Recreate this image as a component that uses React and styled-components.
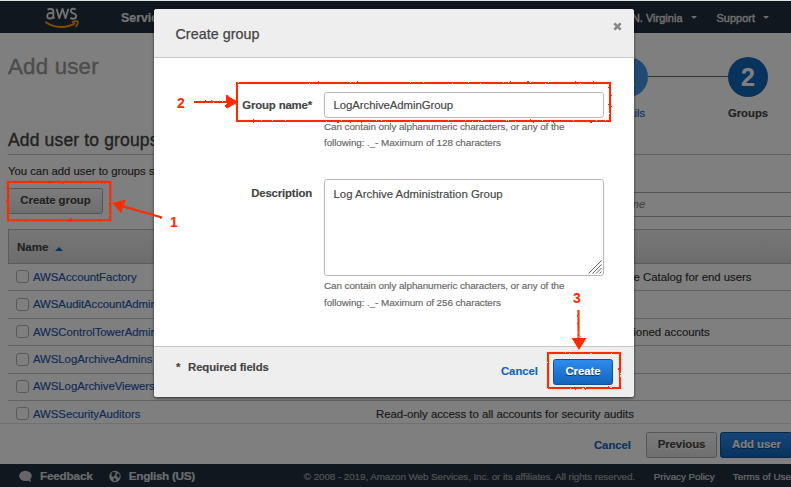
import React from "react";
import styled, { createGlobalStyle } from "styled-components";

const GlobalStyle = createGlobalStyle`
  * { box-sizing: border-box; }
  html, body { margin: 0; padding: 0; overflow: hidden; }
  body { font-family: "Liberation Sans", Arial, sans-serif; color: #333; font-size: 11.5px; }
`;

const Screen = styled.div`
  position: relative;
  width: 791px;
  height: 487px;
  overflow: hidden;
  background: #fff;
  white-space: nowrap;
  -webkit-text-stroke: 0.15px;
`;

/* ---------- console page ---------- */
const Page = styled.div`
  display: flex;
  flex-direction: column;
  height: 487px;
`;
const NavBar = styled.header`
  flex: none;
  display: flex;
  justify-content: space-between;
  height: 33px;
  background: #222f3e;
  border-top: 1px solid #dce6e4;
  color: #e8e8e8;
  font-size: 11.5px;
  font-weight: bold;
`;
const NavGroup = styled.div`
  display: flex;
  align-items: center;
  height: 33px;
`;
const NavStart = styled(NavGroup)`
  padding-left: 44px;
  gap: 41px;
  font-size: 12.4px;
`;
const NavEnd = styled(NavGroup)`
  gap: 20px;
  padding-right: 22px;
  font-size: 10.9px;
  color: #dedede;
  font-weight: normal;
  -webkit-text-stroke: 0.45px #dedede;
`;
const NavItem = styled.span`
  display: flex;
  align-items: center;
  gap: 8px;
  letter-spacing: ${(p) => p.$spacing || "0"};
`;
const NavCaret = styled.i`
  border: 3px solid transparent;
  border-top: 3px solid #ddd;
  border-bottom: 0;
`;
const Masthead = styled.section`
  flex: none;
  display: flex;
  justify-content: space-between;
  height: 96px;
  padding: 24px 23px 0 8px;
`;
const PageTitle = styled.h1`
  margin: -3px 0 0;
  font-size: 22.3px;
  line-height: 26px;
  font-weight: normal;
  color: #9a9a9a;
  letter-spacing: 0.2px;
  -webkit-text-stroke: 0.4px;
`;
const Steps = styled.div`
  display: flex;
`;
const StepLine = styled.div`
  width: 80px;
  height: 1px;
  margin-top: 19px;
  background: #606864;
`;
const Step = styled.div`
  display: flex;
  flex-direction: column;
  align-items: center;
  width: 40px;
  gap: 9px;
  color: ${(p) => (p.$current ? "#444" : "#1166bb")};
  font-weight: ${(p) => (p.$current ? "bold" : "normal")};
  font-size: 11.3px;
  line-height: 14px;
`;
const StepCircle = styled.div`
  width: 40px;
  height: 40px;
  border-radius: 50%;
  background: ${(p) => (p.$current ? "#1166bb" : "#4396e6")};
  color: #fff;
  font-size: 25px;
  line-height: 41px;
  font-weight: bold;
  text-align: center;
`;
const Content = styled.main`
  flex: none;
  height: 294px;
  padding-left: 8px;
  overflow: hidden;
`;
const SectionTitle = styled.h2`
  margin: 0;
  height: 26px;
  padding-top: 1px;
  border-bottom: 1px solid #c4c4c4;
  color: #444;
  font-weight: normal;
  font-size: 17.5px;
  line-height: 21px;
  letter-spacing: 0.15px;
  -webkit-text-stroke: 0.35px;
`;
const Intro = styled.p`
  margin: 9px 0 0;
  line-height: 15px;
  font-size: 11.3px;
`;
const Tools = styled.div`
  display: flex;
  height: 50px;
  padding-top: 9px;
  gap: 57px;
`;
const Button = styled.button`
  display: flex;
  align-items: center;
  justify-content: center;
  width: ${(p) => p.$width};
  height: 25.5px;
  flex: none;
  padding: 0 0 1px;
  font: bold 11.4px "Liberation Sans", Arial, sans-serif;
  letter-spacing: -0.05px;
  -webkit-text-stroke: 0.15px;
  border-radius: 2.5px;
  border: 1px solid ${(p) => (p.$primary ? "#11508e" : "#aaa")};
  color: ${(p) => (p.$primary ? "#fff" : "#444")};
  background: ${(p) => (p.$primary ? "linear-gradient(#2e8bee, #1166bb)" : "linear-gradient(#f8f8f8, #dedede)")};
  text-shadow: ${(p) => (p.$primary ? "0 1px 1px #003366" : "0 1px 0 #fff")};
`;
const SearchBox = styled.div`
  flex: 1;
  height: 25px;
  margin-top: 4px;
  border: 1px solid #aaa;
  border-right: 0;
  padding-left: 456px;
  line-height: 23px;
  font-size: 11.3px;
  font-style: italic;
  color: #888;
`;
const Table = styled.div`
  border-left: 1px solid #c6c6c6;
`;
const HeadRow = styled.div`
  display: flex;
  align-items: center;
  gap: 7px;
  height: 35px;
  padding: 0 0 0 8px;
  border-top: 1px solid #bbb;
  border-bottom: 1px solid #b5b5b5;
  background: linear-gradient(#eee, #dadada);
  font-weight: bold;
  font-size: 11.6px;
  letter-spacing: -0.08px;
  color: #444;
  margin-left: -1px;
  border-left: 1px solid #bbb;
`;
const SortArrow = styled.i`
  border: 4px solid transparent;
  border-bottom: 4px solid #1166bb;
  border-top: 0;
  margin-top: 4px;
`;
const Row = styled.div`
  display: grid;
  grid-template-columns: 24px 344px 1fr;
  align-items: center;
  height: 27.4px;
  margin-left: -1px;
  padding-bottom: 0.6px;
  background: #fff;
  border-bottom: 1px solid #c4c4c4;
`;
const Check = styled.span`
  width: 13px;
  height: 13px;
  margin-left: 8px;
  border: 1px solid #b4b4b4;
  border-radius: 3px;
`;
const GroupLink = styled.a`
  padding-left: 1px;
  color: #1a55ad;
  font-size: 11.4px;
  letter-spacing: -0.06px;
`;
const Cell = styled.span`
  font-size: 11.4px;
  letter-spacing: -0.02px;
`;
const ActionBar = styled.div`
  flex: none;
  display: flex;
  justify-content: flex-end;
  height: 41px;
  padding-top: 8px;
  border-top: 1px solid #e0e0e0;
  background: #fff;
  gap: 3px;
  margin-right: -2px;
`;
const CancelLink = styled.a`
  color: #1166bb;
  font-weight: bold;
  font-size: 11.3px;
  line-height: 25px;
  margin-right: ${(p) => p.$gap};
`;
const BarCancel = styled(CancelLink)`
  line-height: 26px;
`;
const FooterBar = styled.footer`
  flex: 1;
  display: flex;
  align-items: center;
  padding-left: 19px;
  padding-top: 1px;
  background: #222f3e;
  color: #c4c8cc;
`;
const FooterItem = styled.span`
  font-size: ${(p) => p.$size || "9.9px"};
  font-weight: ${(p) => (p.$bold ? "bold" : "normal")};
  color: ${(p) => p.$color || "#d4d8dc"};
  -webkit-text-stroke: 0.2px;
  letter-spacing: ${(p) => p.$spacing || "0"};
  width: ${(p) => p.$width};
  margin-left: ${(p) => p.$left || "0"};
  flex: none;
`;

/* ---------- dialog ---------- */
const Backdrop = styled.div`
  position: absolute;
  inset: 1px 0 0;
  padding: 8px 0 0 154px;
  background: rgba(0, 0, 0, 0.5);
`;
const Dialog = styled.div`
  width: 480px;
  height: 388px;
  border-radius: 3px;
  background: #fff;
  overflow: hidden;
  box-shadow: 0 1px 3px rgba(0, 0, 0, 0.65);
`;
const DialogHead = styled.div`
  display: flex;
  justify-content: space-between;
  height: 49px;
  padding: 17px 12px 0 21.5px;
  background: #eee;
  border-bottom: 1px solid #c8c8c8;
  color: #444;
  font-size: 14.3px;
  line-height: 17px;
  letter-spacing: 0.05px;
  -webkit-text-stroke: 0.25px;
`;
const CloseIcon = styled.svg`
  display: block;
  width: 9px;
  height: 9px;
  margin-top: -4px;
`;
const DialogBody = styled.div`
  display: flex;
  flex-direction: column;
  height: 288px;
  padding-top: 34px;
`;
const Field = styled.div`
  display: grid;
  grid-template-columns: 158px 280px;
  column-gap: 12px;
  height: ${(p) => p.$height};
`;
const Label = styled.label`
  text-align: right;
  font-weight: bold;
  font-size: 11.4px;
  line-height: ${(p) => p.$line};
  color: #444;
  letter-spacing: -0.17px;
`;
const Control = styled.div`
  position: relative;
  height: ${(p) => p.$height};
  border: 1px solid #b9b9b9;
  border-radius: 3px;
  padding: 0 8.5px;
  color: #444;
  font-size: 11.4px;
  line-height: ${(p) => p.$line};
  letter-spacing: ${(p) => p.$spacing};
`;
const ResizeGrip = styled.svg`
  position: absolute;
  right: 1px;
  bottom: 1px;
`;
const Hint = styled.div`
  padding-top: ${(p) => p.$top};
  font-size: 9.9px;
  line-height: ${(p) => p.$line};
  letter-spacing: -0.08px;
  color: #666;
`;
const DialogFoot = styled.div`
  display: flex;
  height: 51px;
  padding: 12px 21px 0 22px;
  background: #eee;
  border-top: 1px solid #c8c8c8;
`;
const Required = styled.span`
  flex: 1;
  color: #444;
  font-size: 11.4px;
  font-weight: bold;
  line-height: 16px;
  letter-spacing: -0.1px;
`;
const Star = styled.span`
  display: inline-block;
  width: 12px;
`;

/* ---------- markup over the page ---------- */
const Markup = styled.svg`
  position: absolute;
  left: 0;
  top: 0;
  font: bold 14px "Liberation Sans", Arial, sans-serif;
  fill: #ff2a00;
`;

const GROUPS = [
  { name: "AWSAccountFactory", desc: "Read-only access to account factory in AWS Service Catalog for end users" },
  { name: "AWSAuditAccountAdmins", desc: "" },
  { name: "AWSControlTowerAdmins", desc: "Admin rights to AWS Control Tower core and provisioned accounts" },
  { name: "AWSLogArchiveAdmins", desc: "" },
  { name: "AWSLogArchiveViewers", desc: "" },
  { name: "AWSSecurityAuditors", desc: "Read-only access to all accounts for security audits" },
];

function AwsLogo() {
  return (
    <svg width="36" height="26" viewBox="0 0 36 26" fill="none">
      <g stroke="#e4e4e4" strokeWidth="1.8" strokeLinejoin="round" transform="translate(0.2 -2) scale(1 1.1)">
        <path d="M3.4 6.2C4.6 5.1 9.2 4.6 9.2 7.7V13.1L10.3 14.2M9.2 9.3C6.2 8.6 3 9 3 11.8C3 14.8 7.6 15 9.2 12" />
        <path d="M12.3 5.2L15.1 13.8L18.3 5.4L21.3 13.8L24.2 5.2" />
        <path d="M31.5 5.8C29.4 4.7 26.6 5 26.6 7.3C26.6 10 32 8.9 32 11.8C32 14.7 28.3 14.8 26 13.5" />
      </g>
      <path d="M1.5 17C10.5 23.6 23 23.6 31.2 18.2" stroke="#ff9900" strokeWidth="2" />
      <path d="M28 17.2C31 15.8 34 15.8 34 17C34 18.6 33 20.6 31.4 22" stroke="#ff9900" strokeWidth="1.6" />
    </svg>
  );
}

function SpeechIcon() {
  return (
    <svg width="14" height="13" viewBox="0 0 14 13" fill="#c9ccd0">
      <ellipse cx="7" cy="5.8" rx="6.9" ry="5.6" />
      <path d="M8 10L13.2 12.6L12 8Z" />
    </svg>
  );
}

function GlobeIcon() {
  return (
    <svg width="13" height="13" viewBox="0 0 13 13">
      <circle cx="6.5" cy="6.5" r="6.2" fill="#c9ccd0" />
      <path
        d="M3.2 2.2L5 1.6L7.4 2L6.6 3.6L7.4 4.6L5.6 5.8L4.9 7L3 6.2L2.6 4.4ZM8.8 3.4L10.8 3.2L11.8 5.6L11 8.2L9.2 7.2L8.2 5.4ZM5 8.2L7.2 8.8L8 10.2L6.6 11.8L5.2 10.8Z"
        fill="#222f3e"
      />
    </svg>
  );
}

function Annotations() {
  return (
    <Markup width="791" height="487" viewBox="0 0 791 487">
      <defs>
        <filter id="rough" filterUnits="userSpaceOnUse" x="0" y="0" width="791" height="487" colorInterpolationFilters="sRGB">
          <feTurbulence type="fractalNoise" baseFrequency="0.4" numOctaves="2" seed="4" />
          <feDisplacementMap in="SourceGraphic" scale="2.2" xChannelSelector="R" yChannelSelector="G" result="jagged" />
          <feGaussianBlur in="jagged" stdDeviation="0.35" />
        </filter>
      </defs>
      <g filter="url(#rough)">
        <g fill="none" stroke="#ff2a00" strokeWidth="2.1">
          <rect x="8" y="182" width="102.3" height="38.3" />
          <rect x="237" y="83" width="373" height="38" />
          <rect x="548" y="353" width="72" height="35" />
          <path d="M162 217.5L122 206M194 102H228M578.5 310V340" />
        </g>
        <path d="M112 203L126 199.5L121 213ZM238 102L226 94.8V109.2ZM579 350L571.5 338H586.5Z" />
      </g>
      <text x="170" y="227">1</text>
      <text x="177" y="108">2</text>
      <text x="573" y="303">3</text>
    </Markup>
  );
}

export default function App() {
  return (
    <Screen>
      <GlobalStyle />
      <Page>
        <NavBar>
          <NavStart>
            <AwsLogo />
            <span>Services</span>
          </NavStart>
          <NavEnd>
            <NavItem $spacing="0.05px">N. Virginia <NavCaret /></NavItem>
            <NavItem $spacing="0.05px">Support <NavCaret /></NavItem>
          </NavEnd>
        </NavBar>
        <Masthead>
          <PageTitle>Add user</PageTitle>
          <Steps>
            <Step><StepCircle>1</StepCircle>Details</Step>
            <StepLine />
            <Step $current><StepCircle $current>2</StepCircle>Groups</Step>
          </Steps>
        </Masthead>
        <Content>
          <SectionTitle>Add user to groups</SectionTitle>
          <Intro>You can add user to groups selected below.</Intro>
          <Tools>
            <Button $width="95px">Create group</Button>
            <SearchBox>name</SearchBox>
          </Tools>
          <Table>
            <HeadRow>Name <SortArrow /></HeadRow>
            {GROUPS.map((g) => (
              <Row key={g.name}>
                <Check />
                <GroupLink>{g.name}</GroupLink>
                <Cell>{g.desc}</Cell>
              </Row>
            ))}
          </Table>
        </Content>
        <ActionBar>
          <BarCancel $gap="12px">Cancel</BarCancel>
          <Button $width="71px">Previous</Button>
          <Button $width="73px" $primary>Add user</Button>
        </ActionBar>
        <FooterBar>
          <SpeechIcon />
          <FooterItem $bold $size="11.8px" $left="8px" $width="69px" $spacing="-0.2px">Feedback</FooterItem>
          <GlobeIcon />
          <FooterItem $bold $size="11.8px" $left="8px" $width="175px" $spacing="-0.35px">English (US)</FooterItem>
          <FooterItem $color="#a0a4a8" $width="350px" $spacing="-0.09px">
            © 2008 - 2019, Amazon Web Services, Inc. or its affiliates. All rights reserved.
          </FooterItem>
          <FooterItem $width="79px" $spacing="-0.05px">Privacy Policy</FooterItem>
          <FooterItem>Terms of Use</FooterItem>
        </FooterBar>
      </Page>
      <Backdrop>
        <Dialog>
          <DialogHead>
            Create group
            <CloseIcon viewBox="0 0 9 9"><path d="M1.3 1.3L7.7 7.7M7.7 1.3L1.3 7.7" stroke="#888" strokeWidth="2.6" /></CloseIcon>
          </DialogHead>
          <DialogBody>
            <Field $height="87px">
              <Label $line="26px">Group name*</Label>
              <div>
                <Control $height="26px" $line="25px" $spacing="-0.07px">LogArchiveAdminGroup</Control>
                <Hint $top="1px" $line="16px">
                  Can contain only alphanumeric characters, or any of the<br />
                  following: ._- Maximum of 128 characters
                </Hint>
              </div>
            </Field>
            <Field $height="130px">
              <Label $line="28px">Description</Label>
              <div>
                <Control $height="97px" $line="28px">
                  Log Archive Administration Group
                  <ResizeGrip width="14" height="14" stroke="#666" strokeWidth="1">
                    <path d="M0.5 13.5L13.5 0.5M4.5 13.5L13.5 4.5M8 13.5L13.5 8M11.5 13.5L13.5 11.5" />
                  </ResizeGrip>
                </Control>
                <Hint $top="0.5px" $line="17px">
                  Can contain only alphanumeric characters, or any of the<br />
                  following: ._- Maximum of 256 characters
                </Hint>
              </div>
            </Field>
          </DialogBody>
          <DialogFoot>
            <Required><Star>*</Star>Required fields</Required>
            <CancelLink $gap="15px">Cancel</CancelLink>
            <Button $width="60px" $primary>Create</Button>
          </DialogFoot>
        </Dialog>
      </Backdrop>
      <Annotations />
    </Screen>
  );
}
